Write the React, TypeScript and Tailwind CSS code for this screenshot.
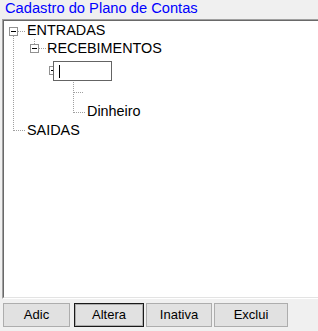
import type { ReactNode } from "react";

const font = { fontFamily: '"Liberation Sans", Arial, sans-serif' };

function Toggle({ className }: { className: string }) {
  return (
    <span
      className={`absolute flex size-[9px] items-center justify-center border border-[#919191] bg-white ${className}`}
    >
      <span className="h-px w-[5px] bg-black" />
    </span>
  );
}

function Row({ indent, height, children }: { indent: number; height: number; children?: ReactNode }) {
  return (
    <div className="flex items-center" style={{ paddingLeft: indent, height }}>
      {children}
    </div>
  );
}

function Button({ label, width, primary, className = "" }: { label: string; width: number; primary?: boolean; className?: string }) {
  return (
    <button
      className={`h-6 bg-[#e1e1e1] text-[13px] text-black ${
        primary ? "border border-[#1a1a1a] shadow-[inset_0_0_0_1px_#adadad]" : "border border-[#adadad]"
      } ${className}`}
      style={{ width }}
    >
      {label}
    </button>
  );
}

export default function App() {
  return (
    <div className="flex h-[331px] w-[318px] flex-col overflow-hidden bg-[#f0f0f0]" style={font}>
      <div className="h-[19px] pl-[5px] text-[14.7px] leading-[17px] text-[#0000ff]">
        Cadastro do Plano de Contas
      </div>

      <div className="ml-[2px] h-[280px] w-[330px] border-l border-t border-b border-l-[#a0a0a0] border-t-[#a0a0a0] border-b-white">
        <div className="relative h-full border-l border-t border-b border-l-[#696969] border-t-[#696969] border-b-[#e3e3e3] bg-white text-[14.4px] text-black">
          <svg className="pointer-events-none absolute -left-[4px] -top-[21px]" width="120" height="140">
            <g stroke="#a0a0a0" strokeWidth="1" strokeDasharray="1 1" shapeRendering="crispEdges">
              <line x1="13.5" y1="36" x2="13.5" y2="131" />
              <line x1="18" y1="31.5" x2="26" y2="31.5" />
              <line x1="14" y1="130.5" x2="26" y2="130.5" />
              <line x1="34.5" y1="39" x2="34.5" y2="44" />
              <line x1="39" y1="48.5" x2="46" y2="48.5" />
              <line x1="73.5" y1="82" x2="73.5" y2="113" />
              <line x1="74" y1="92.5" x2="84" y2="92.5" />
              <line x1="74" y1="112.5" x2="86" y2="112.5" />
            </g>
          </svg>

          <div className="relative pt-[1px]">
            <Toggle className="left-[5px] top-[6px]" />
            <Toggle className="left-[26px] top-[23px]" />
            <span className="absolute left-[45px] top-[45px] h-[9px] w-[6px] border border-[#919191] bg-white">
              <span className="absolute left-[1px] top-[3px] h-px w-[3px] bg-black" />
            </span>

            <Row indent={23} height={18}>
              ENTRADAS
            </Row>
            <Row indent={43} height={17}>
              RECEBIMENTOS
            </Row>
            <div className="relative h-[25px] pl-[49px] pt-[4px]">
              <div className="flex h-[20px] w-[59px] items-center border border-[#646464] bg-white pl-[5px]">
                <span className="h-[13px] w-px bg-black" />
              </div>
            </div>
            <Row indent={83} height={21} />
            <Row indent={83} height={18}>
              Dinheiro
            </Row>
            <Row indent={23} height={19}>
              SAIDAS
            </Row>
          </div>
        </div>
      </div>

      <div className="flex items-center gap-[2px] pl-[3px] pt-[4px]">
        <Button label="Adic" width={67} />
        <Button label="Altera" width={70} primary className="ml-[2px]" />
        <Button label="Inativa" width={66} />
        <Button label="Exclui" width={74} />
      </div>
    </div>
  );
}
